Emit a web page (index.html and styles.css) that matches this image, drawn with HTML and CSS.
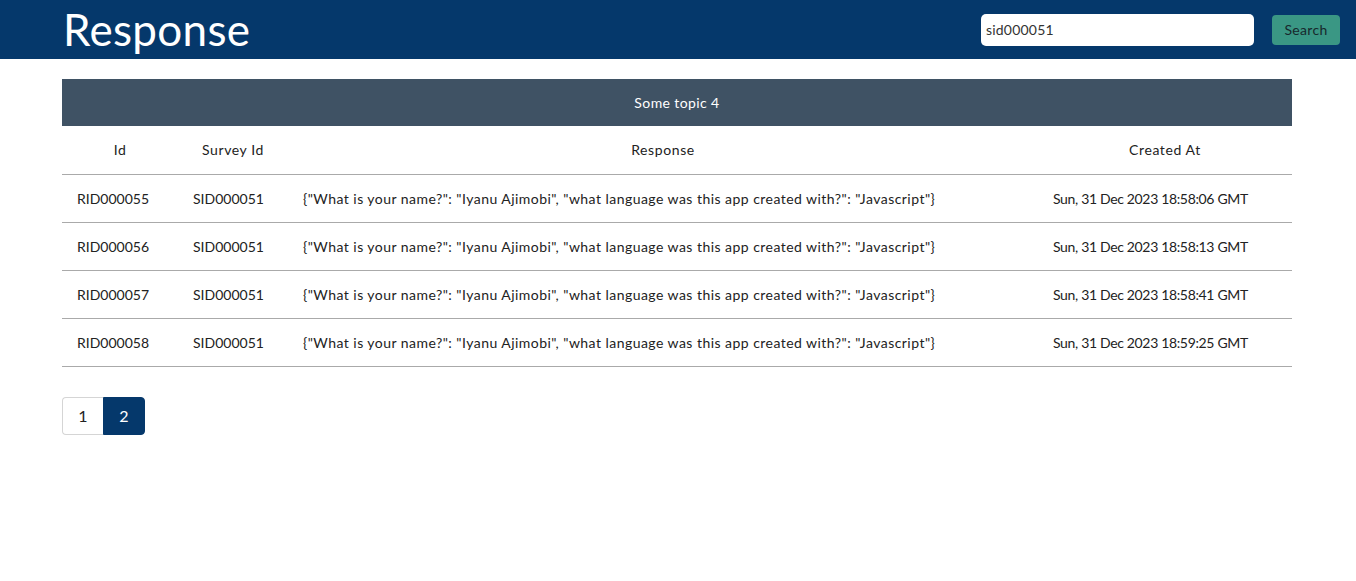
FILE: index.html
```html
<!DOCTYPE html>
<html>
<head>
<meta charset="utf-8">
<link rel="stylesheet" href="styles.css">
</head>
<body>
<header class="topbar">
  <h1 class="title">Response</h1>
  <form class="search">
    <input class="search-input" type="text" value="sid000051">
    <button class="search-btn" type="button">Search</button>
  </form>
</header>
<main class="content">
  <table class="table">
    <colgroup>
      <col class="c1"><col class="c2"><col class="c3"><col class="c4">
    </colgroup>
    <thead>
      <tr><th class="caption" colspan="4">Some topic 4</th></tr>
      <tr class="head"><th>Id</th><th>Survey Id</th><th>Response</th><th>Created At</th></tr>
    </thead>
    <tbody>
      <tr><td>RID000055</td><td>SID000051</td><td class="resp">{"What is your name?": "Iyanu Ajimobi", "what language was this app created with?": "Javascript"}</td><td class="date">Sun, 31 Dec 2023 18:58:06 GMT</td></tr>
      <tr><td>RID000056</td><td>SID000051</td><td class="resp">{"What is your name?": "Iyanu Ajimobi", "what language was this app created with?": "Javascript"}</td><td class="date">Sun, 31 Dec 2023 18:58:13 GMT</td></tr>
      <tr><td>RID000057</td><td>SID000051</td><td class="resp">{"What is your name?": "Iyanu Ajimobi", "what language was this app created with?": "Javascript"}</td><td class="date">Sun, 31 Dec 2023 18:58:41 GMT</td></tr>
      <tr><td>RID000058</td><td>SID000051</td><td class="resp">{"What is your name?": "Iyanu Ajimobi", "what language was this app created with?": "Javascript"}</td><td class="date">Sun, 31 Dec 2023 18:59:25 GMT</td></tr>
    </tbody>
  </table>
  <nav class="pager">
    <span class="page">1</span><span class="page active">2</span>
  </nav>
</main>
</body>
</html>
```
FILE: styles.css
```css
* { box-sizing: border-box; }
html, body { margin: 0; padding: 0; background: #fff; }
body {
  font-family: Lato, "Noto Sans", sans-serif;
  color: #222;
  font-size: 14px;
}
.topbar {
  background: #05386b;
  height: 59px;
  display: flex;
  align-items: center;
  justify-content: space-between;
  padding: 0 16px 0 63px;
}
.title {
  margin: 0;
  color: #fff;
  font-weight: 400;
  font-size: 44px;
  line-height: 59px;
  letter-spacing: 0.3px;
}
.search { display: flex; align-items: center; gap: 18px; }
.search-input {
  width: 273px;
  height: 32px;
  border: 0;
  border-radius: 5px;
  padding: 0 5px;
  font-family: inherit;
  font-size: 14px;
  color: #333;
  letter-spacing: 0.2px;
}
.search-btn {
  width: 68px;
  height: 30px;
  border: 0;
  border-radius: 4px;
  background: #3a9784;
  color: #17282c;
  font-family: inherit;
  font-size: 14px;
  letter-spacing: 0.3px;
  padding: 0;
}
.content { padding: 20px 64px 0 62px; }
.table {
  width: 1230px;
  border-collapse: collapse;
  table-layout: fixed;
}
.c1 { width: 116px; }
.c2 { width: 110px; }
.c3 { width: 750px; }
.c4 { width: 254px; }
.caption {
  background: #3f5264;
  color: #fff;
  font-weight: 400;
  height: 47px;
  text-align: center;
  padding: 0;
  letter-spacing: 0.4px;
}
.head th {
  font-weight: 400;
  text-align: center;
  height: 48px;
  padding: 0;
  border-bottom: 1px solid #aaa;
  letter-spacing: 0.6px;
}
td {
  height: 48px;
  padding: 0 15px;
  text-align: left;
  border-bottom: 1px solid #aaa;
  white-space: nowrap;
}
.resp { letter-spacing: 0.46px; }
.date { letter-spacing: -0.34px; }
.pager { display: flex; margin-top: 30px; }
.page {
  width: 41px;
  height: 38px;
  display: flex;
  align-items: center;
  justify-content: center;
  border: 1px solid #d5d5d5;
  font-size: 16px;
  color: #222;
}
.page:first-child { border-radius: 4px 0 0 4px; border-right: 0; }
.page.active {
  background: #05386b;
  border-color: #05386b;
  color: #fff;
  border-radius: 0 4px 4px 0;
  width: 42px;
}
```
